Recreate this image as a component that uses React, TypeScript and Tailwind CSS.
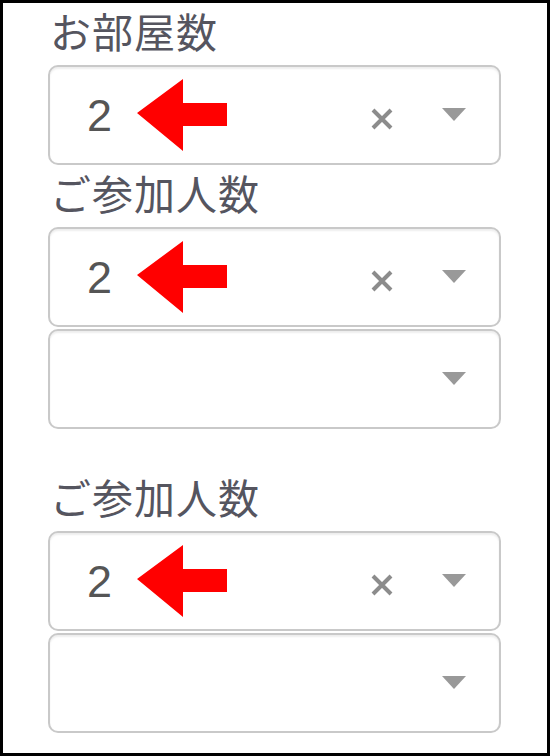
const labelFont = { fontFamily: '"Noto Sans CJK JP", "Noto Sans", sans-serif' };

const Arrow = () => (
  <svg width="90" height="72" viewBox="0 0 90 72" className="shrink-0">
    <polygon points="0,34 46,0 46,24 90,24 90,47 46,47 46,72" fill="#ff0000" />
  </svg>
);

const ClearIcon = () => (
  <svg width="22" height="22" viewBox="0 0 22 22">
    <path d="M2 2 L20 20 M20 2 L2 20" stroke="#8c8c8c" strokeWidth="4" />
  </svg>
);

const Caret = () => (
  <svg width="24" height="13" viewBox="0 0 24 13">
    <polygon points="0,0 24,0 12,13" fill="#999999" />
  </svg>
);

const SelectBox = ({ value }: { value?: string }) => (
  <div className="flex h-[100px] w-[453px] items-start rounded-[10px] border-2 border-[#c9c9c9] bg-white shadow-[inset_0_2px_2px_rgba(0,0,0,0.07)]">
    {value ? (
      <div className="flex h-full items-center pl-[37px]">
        <span
          className="text-[45px] leading-none text-[#555555]"
          style={{ fontFamily: '"Liberation Sans", Arial, sans-serif' }}
        >
          {value}
        </span>
        <span className="ml-[25px]">
          <Arrow />
        </span>
      </div>
    ) : null}
    <div className="ml-auto mr-[33px] mt-[41px] flex items-start gap-[49px]">
      {value ? <ClearIcon /> : null}
      <Caret />
    </div>
  </div>
);

const Label = ({ text }: { text: string }) => (
  <div
    className="h-[62px] pl-[2px] pt-[2px] text-[41px] leading-[50px] tracking-[1px] text-[#55555f]"
    style={labelFont}
  >
    {text}
  </div>
);

export default function App() {
  return (
    <div className="box-border h-[756px] w-[550px] border-[3px] border-black bg-white">
      <div className="ml-[45px] flex flex-col">
        <Label text="お部屋数" />
        <SelectBox value="2" />
        <Label text="ご参加人数" />
        <SelectBox value="2" />
        <div className="h-[2px]" />
        <SelectBox />
        <div className="h-[40px]" />
        <Label text="ご参加人数" />
        <SelectBox value="2" />
        <div className="h-[2px]" />
        <SelectBox />
      </div>
    </div>
  );
}
